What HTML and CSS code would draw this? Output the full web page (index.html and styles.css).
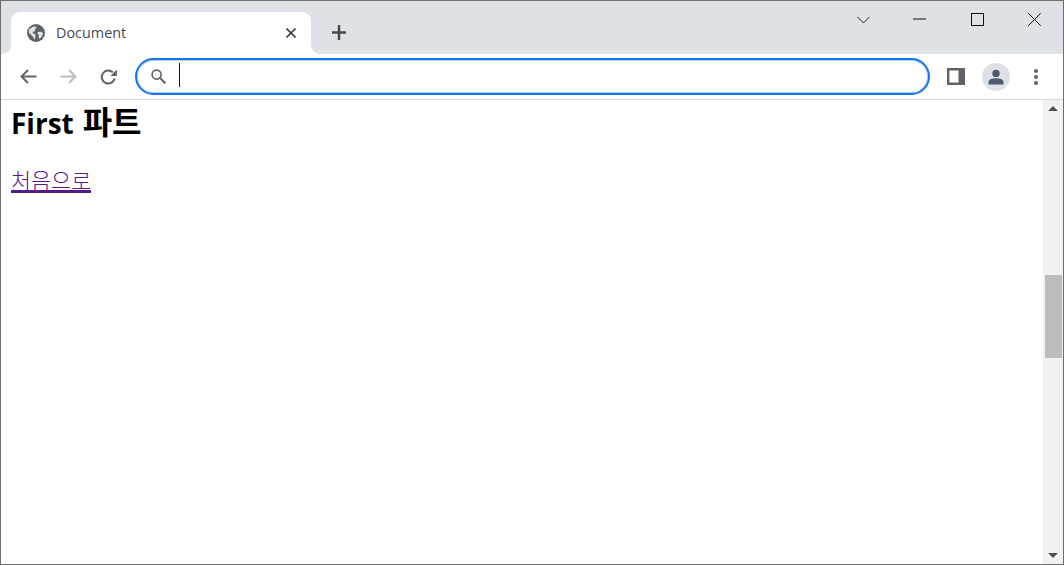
FILE: index.html
```html
<!DOCTYPE html>
<html lang="ko">
<head>
<meta charset="utf-8">
<title>Document</title>
<link rel="stylesheet" href="styles.css">
</head>
<body>
<div class="window">
  <header class="titlebar">
    <div class="tab">
      <svg class="globe" width="18" height="18" viewBox="0 0 18 18"><circle cx="9" cy="9" r="9" fill="#5f6368"/><path d="M2 5.5 L5.5 3 L8.5 2.2 L9.5 4 L7.8 5.5 L8.2 7.2 L6 7.6 L5.6 9.2 L8 10 L8.6 12 L7.6 15.8 L5.8 12.6 L3.6 10.2 L1.8 8.8 Z M11 8 L14 7.8 L16.2 9 L14.8 12.6 L12.4 15 L11.6 13 L12 11 L10.4 9.6 Z" fill="#dee1e6"/></svg>
      <span class="tab-title">Document</span>
      <svg class="tab-close" width="10" height="10" viewBox="0 0 10 10"><path d="M0.5 0.5 L9.5 9.5 M9.5 0.5 L0.5 9.5" stroke="#3c4043" stroke-width="1.6" fill="none"/></svg>
    </div>
    <svg class="new-tab" width="14" height="15" viewBox="0 0 14 15"><path d="M7 0 V15 M0 7.5 H14" stroke="#45484d" stroke-width="2.4" fill="none"/></svg>
    <div class="controls">
      <svg class="ctl-chevron" width="13" height="8" viewBox="0 0 13 8"><path d="M0.4 0.8 L6.5 7 L12.6 0.8" stroke="#202124" stroke-width="1" fill="none"/></svg>
      <svg class="ctl-min" width="13" height="2" viewBox="0 0 13 2"><path d="M0 1 H13" stroke="#111" stroke-width="1" fill="none"/></svg>
      <svg class="ctl-max" width="13" height="13" viewBox="0 0 13 13"><rect x="0.5" y="0.5" width="12" height="12" stroke="#111" fill="none"/></svg>
      <svg class="ctl-close" width="13" height="13" viewBox="0 0 13 13"><path d="M0.3 0.3 L12.7 12.7 M12.7 0.3 L0.3 12.7" stroke="#111" stroke-width="1" fill="none"/></svg>
    </div>
  </header>
  <nav class="toolbar">
    <svg class="nav-icon" width="17" height="15" viewBox="0 0 17 15"><path d="M16.5 7.5 H2 M8 1 L1.5 7.5 L8 14" stroke="#5f6368" stroke-width="1.9" fill="none"/></svg>
    <svg class="nav-icon fwd" width="17" height="15" viewBox="0 0 17 15"><path d="M0.5 7.5 H15 M9 1 L15.5 7.5 L9 14" stroke="#bdbdbd" stroke-width="1.9" fill="none"/></svg>
    <svg class="nav-icon reload" width="17" height="16" viewBox="0 0 17 16"><path d="M14.6 9.6 A6.5 6.5 0 1 1 12.8 3.4" stroke="#5f6368" stroke-width="2" fill="none"/><path d="M16.8 0.6 V7 H10.4 Z" fill="#5f6368"/></svg>
    <div class="omnibox">
      <svg class="search" width="15" height="15" viewBox="0 0 15 15"><circle cx="5.6" cy="5.6" r="4.5" stroke="#5f6368" stroke-width="1.6" fill="none"/><path d="M8.8 8.8 L14.4 14.4" stroke="#5f6368" stroke-width="2" fill="none"/></svg>
      <span class="caret"></span>
    </div>
    <svg class="side-panel" width="18" height="17" viewBox="0 0 18 17"><path fill-rule="evenodd" d="M0 0 H18 V17 H0 Z M2.4 2.5 V14.5 H11.5 V2.5 Z" fill="#5f6368"/></svg>
    <div class="avatar">
      <svg width="16" height="16" viewBox="0 0 16 16"><circle cx="8" cy="4.4" r="3.7" fill="#4d5a72"/><path d="M0.5 15.5 V13 C0.5 10.2 5 9.3 8 9.3 C11 9.3 15.5 10.2 15.5 13 V15.5 Z" fill="#4d5a72"/></svg>
    </div>
    <div class="menu"><i></i><i></i><i></i></div>
  </nav>
  <div class="viewport">
    <main class="page">
      <h1 class="heading"><span class="latin">First</span> 파트</h1>
      <a class="link" href="#">처음으로</a>
    </main>
    <aside class="scrollbar">
      <div class="arrow up"></div>
      <div class="thumb"></div>
      <div class="track"></div>
      <div class="arrow down"></div>
    </aside>
  </div>
</div>
</body>
</html>
```

FILE: styles.css
```css
* { box-sizing: border-box; }
html, body { margin: 0; height: 100%; background: #fff; overflow: hidden; }
.window {
  width: 1064px; height: 565px;
  border: 1px solid #6f6f6f;
  display: flex; flex-direction: column;
  font-family: "Noto Sans", "Noto Sans CJK KR", sans-serif;
}
.titlebar {
  height: 53px; flex: none;
  background: #dee1e6;
  display: flex; align-items: flex-start;
  padding: 11px 0 0 10px;
}
.tab {
  position: relative;
  width: 300px; height: 42px;
  background: #fff;
  border-radius: 9px 9px 0 0;
  display: flex; align-items: center;
  padding: 0 15px 1px 16px;
}
.tab::before, .tab::after {
  content: ""; position: absolute; bottom: 0;
  width: 9px; height: 9px;
}
.tab::before { left: -9px; background: radial-gradient(circle at 0 0, #dee1e6 8.5px, #fff 9.5px); }
.tab::after { right: -9px; background: radial-gradient(circle at 100% 0, #dee1e6 8.5px, #fff 9.5px); }
.globe { flex: none; }
.tab-title {
  margin-left: 11px; flex: 1;
  font-family: "Open Sans", "Noto Sans", sans-serif;
  font-size: 14.4px; color: #45494e;
}
.new-tab { margin: 13px 0 0 21px; flex: none; }
.controls {
  margin-left: auto;
  display: flex; align-items: center;
  height: 14px; margin-top: 0;
  padding-right: 22px;
}
.ctl-chevron { margin: 2px 43px 0 0; }
.ctl-min { margin-right: 45px; }
.ctl-max { margin-right: 44px; }
.toolbar {
  height: 46px; flex: none;
  background: #fff;
  border-bottom: 1px solid #dadce0;
  display: flex; align-items: center;
  padding: 0 0 0 19px;
}
.nav-icon { flex: none; }
.fwd { margin-left: 23px; }
.reload { margin-left: 23px; }
.omnibox {
  width: 795px; height: 37px;
  margin-left: 18px;
  border: 2px solid #1a73e8;
  box-shadow: inset 0 0 0 1px rgba(26, 115, 232, .35);
  border-radius: 19px;
  display: flex; align-items: center;
  padding-left: 14px;
}
.search { flex: none; }
.caret { width: 1px; height: 24px; background: #111; margin: 0 0 3px 13px; }
.side-panel { margin-left: 17px; flex: none; }
.avatar {
  width: 28px; height: 28px; margin-left: 17px;
  background: #dee1e6; border-radius: 50%;
  display: flex; align-items: center; justify-content: center;
  flex: none;
}
.menu {
  margin-left: 24px;
  display: flex; flex-direction: column; gap: 2px;
}
.menu i { display: block; width: 4px; height: 4px; border-radius: 50%; background: #5f6368; }
.viewport { flex: 1; display: flex; min-height: 0; }
.page { flex: 1; padding: 0 10px; }
.heading {
  margin: 0;
  font-family: "Noto Sans CJK KR", sans-serif;
  font-size: 32px; line-height: 40px; font-weight: 700; color: #000;
}
.latin { font-family: "Open Sans", sans-serif; font-size: 28px; }
.link {
  display: inline-block; margin-top: 26px;
  font-family: "Noto Sans CJK KR", sans-serif; font-weight: 300;
  font-size: 21.8px; line-height: 21px;
  color: #551a8b;
  text-decoration: none;
  border-bottom: 3px solid #551a8b;
}
.scrollbar {
  width: 20px; flex: none;
  background: #f1f1f1;
  display: flex; flex-direction: column; align-items: center;
}
.arrow { height: 17px; flex: none; width: 100%; display: flex; justify-content: center; align-items: center; }
.arrow::before { content: ""; width: 0; height: 0; border-left: 5px solid transparent; border-right: 5px solid transparent; }
.up::before { border-bottom: 5px solid #505050; }
.down::before { border-top: 5px solid #505050; }
.thumb { width: 17px; height: 83px; margin-top: 158px; background: #bcbcbc; flex: none; }
.track { flex: 1; }
```
